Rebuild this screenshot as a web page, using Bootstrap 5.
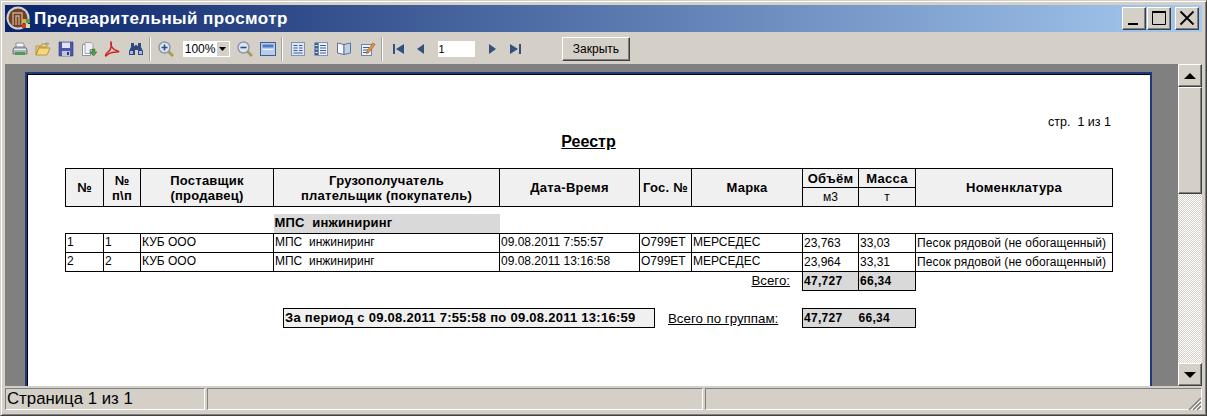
<!DOCTYPE html>
<html lang="ru">
<head>
    <meta charset="UTF-8">
    <meta name="viewport" content="width=device-width, initial-scale=1.0">
    <title>Предварительный просмотр</title>
    <link href="https://cdn.jsdelivr.net/npm/bootstrap@5.3.2/dist/css/bootstrap.min.css" rel="stylesheet">
    <style>
        html, body { height: 416px; overflow: hidden; background: #d4d0c8; }
        body { font-family: "Liberation Sans", Arial, sans-serif; color: #000; }
        .win-frame { height: 416px; background: #d4d0c8; border: 1px solid; border-color: #d4d0c8 #404040 #404040 #d4d0c8; box-shadow: inset 1px 1px 0 #fff, inset -1px -1px 0 #808080; padding: 4px 4px 4px 4px; }
        .win-title { height: 27px; background: linear-gradient(90deg, #0a246a 0%, #a6caf0 100%); padding: 0 3px 0 1px; }
        .win-title-text { font-size: 17px; font-weight: 700; color: #fff; letter-spacing: .42px; margin-left: 3px; line-height: 27px; white-space: nowrap; }
        .win-btn { width: 24px; height: 23px; background: #d4d0c8; border: 1px solid; border-color: #fff #404040 #404040 #fff; box-shadow: inset -1px -1px 0 #808080; margin-left: 1px; }
        .tool-bar { height: 32px; padding-left: 3px; padding-top: 1px; }
        .tool-icon { width: 23.2px; height: 16px; flex: none; text-align: center; line-height: 0; }
        .tool-sep { width: 2px; height: 24px; flex: none; background: #a8a59e; border-right: 1px solid #fff; margin: 0 3px 0 2px; }
        .tool-sep-wide { margin-right: 4px; }
        .zoom-combo { width: 47px; height: 16px; flex: none; background: #fff; font-size: 12px; line-height: 16px; padding-left: 2px; margin: 0 3.400px 0 5.400px; }
        .combo-arrow { width: 12px; height: 14px; background: #d4d0c8; margin: 1px 1px 1px 0; }
        .page-input { width: 37px; height: 16px; flex: none; background: #fff; font-size: 11px; line-height: 16px; padding-left: 1px; margin: 0 7px 0 4px; }
        .close-btn { width: 68px; height: 24px; flex: none; background: #d4d0c8; font-size: 12px; line-height: 22px; text-align: center; border: 1px solid; border-color: #fff #404040 #404040 #fff; box-shadow: inset -1px -1px 0 #808080; margin-left: 34px; }
        .view-row { height: 322px; }
        .view-area { background: #808080; padding: 8px 26px 0 20px; min-width: 0; }
        .sheet { height: 314px; background: #fff; border: solid #1f3a7a; border-width: 2px 2px 0 2px; box-shadow: inset 1px 1px 0 #000; padding: 0 0 0 38px; overflow: hidden; }
        .sheet-num { width: 1046px; text-align: right; font-size: 12.500px; line-height: 14px; padding-top: 41px; }
        .sheet-title { width: 1047px; text-align: center; font-size: 16px; font-weight: 700; text-decoration: underline; line-height: 18px; margin-top: 4px; margin-bottom: 17px; }
        .reg-table { table-layout: fixed; width: 1047px; border-collapse: collapse; font-size: 12px; }
        .reg-table th, .reg-table td { border: 1px solid #000; padding: 0 1px; overflow: hidden; white-space: nowrap; }
        .reg-table tr.head-top { height: 19px; }
        .reg-table tr.head-sub { height: 19px; }
        .reg-table th { background: #f0f0f0; font-size: 13px; line-height: 15px; font-weight: 700; text-align: center; vertical-align: middle; letter-spacing: .25px; }
        .reg-table th.unit-cell { font-weight: 400; font-size: 12px; letter-spacing: 0; }
        .reg-table tr.data-row td { height: 19px; line-height: 16px; vertical-align: top; font-size: 12px; }
        .reg-table tr.data-row td.num-cell { vertical-align: bottom; line-height: 17px; font-size: 12px; }
        .reg-table tr.data-row td.goods-cell { vertical-align: bottom; line-height: 17px; font-size: 12px; letter-spacing: .07px; }
        .reg-table tr.gap-row td { height: 7px; border: 0; padding: 0; }
        .reg-table tr.group-row td { height: 20px; border: 0; }
        .reg-table tr.group-row td.group-band { background: #d9d9d9; font-size: 13px; font-weight: 700; letter-spacing: .2px; line-height: 18px; }
        .reg-table tr.total-row td { height: 19px; border: 0; }
        .reg-table tr.total-row td.total-lbl { text-align: right; text-decoration: underline; font-size: 13.300px; padding-right: 12px; line-height: 18px; }
        .reg-table tr.total-row td.total-val { border: 1px solid #000; background: #d9d9d9; font-size: 12px; font-weight: 700; letter-spacing: .3px; }
        .period-row { margin-top: 17px; margin-left: 218px; }
        .period-box { width: 372px; height: 20px; flex: none; background: #f0f0f0; border: 1px solid #000; font-size: 13px; font-weight: 700; line-height: 18px; padding-left: 1px; letter-spacing: .27px; white-space: nowrap; overflow: hidden; }
        .period-lbl { width: 147px; flex: none; padding-left: 13px; font-size: 13.300px; text-decoration: underline; line-height: 21px; white-space: nowrap; }
        .period-sum { width: 114px; height: 20px; flex: none; background: #d9d9d9; border: 1px solid #000; font-size: 12px; font-weight: 700; line-height: 18px; padding-left: 1px; letter-spacing: .3px; }
        .scroll-col { width: 24px; flex: none; background-color: #f4f3f0; background-image: repeating-conic-gradient(#d4d0c8 0 25%, #fff 0 50%); background-size: 2px 2px; }
        .scroll-btn { height: 23px; background: #d4d0c8; border: 1px solid; border-color: #fff #404040 #404040 #fff; box-shadow: inset -1px -1px 0 #808080; }
        .scroll-thumb { height: 107px; background: #d4d0c8; border: 1px solid; border-color: #fff #404040 #404040 #fff; box-shadow: inset -1px -1px 0 #808080; }
        .status-bar { height: 25px; padding-top: 2px; }
        .status-cell { height: 22px; background: #d4d0c8; border: 1px solid; border-color: #808080 #fff #fff #808080; font-size: 16.800px; line-height: 20px; padding-left: 1px; white-space: nowrap; }
        .status-a { width: 200px; flex: none; }
        .status-b { width: 496px; flex: none; margin: 0 2px; }
        .size-grip { position: absolute; right: 0; bottom: 0; }
    </style>
</head>
<body>
    <div class="win-frame d-flex flex-column">
        <!-- title -->
        <div class="win-title d-flex align-items-center flex-none">
            <svg width="25" height="25" viewBox="0 0 25 25">
                <circle cx="12" cy="12" r="11.500" fill="#cfd0d4"/>
                <circle cx="12" cy="12" r="9.500" fill="#6e4028"/>
                <path d="M7 19V7h9v12M10 19V10h3v9" fill="none" stroke="#c8a888" stroke-width="1.400"/>
                <rect x="16" y="13" width="4" height="4" fill="#d8b040"/>
                <rect x="20" y="13" width="4" height="4" fill="#5a9a50"/>
                <rect x="16" y="18" width="4" height="4" fill="#c04030"/>
                <rect x="20" y="18" width="4" height="4" fill="#e0d8a0"/>
            </svg>
            <span class="win-title-text">Предварительный просмотр</span>
            <div class="d-flex ms-auto">
                <div class="win-btn"><svg class="d-block" width="22" height="21" viewBox="0 0 22 21"><rect x="5" y="15" width="10" height="2"/></svg></div>
                <div class="win-btn"><svg class="d-block" width="22" height="21" viewBox="0 0 22 21"><path d="M4.500 3.500h13v13h-13z" fill="none" stroke="#000"/><rect x="4" y="3" width="14" height="2"/></svg></div>
                <div class="win-btn ms-1"><svg class="d-block" width="22" height="21" viewBox="0 0 22 21"><path d="M4.500 3.500l13 13M17.500 3.500l-13 13" stroke="#000" stroke-width="1.800"/></svg></div>
            </div>
        </div>

        <!-- toolbar -->
        <div class="tool-bar d-flex align-items-center">
            <div class="tool-icon"><svg width="16" height="16" viewBox="0 0 16 16"><path d="M4 7V2h7l1 1v4z" fill="#f4f4f4" stroke="#7a8088" stroke-width=".8"/><path d="M1 8l2-2h10l2 2v5H1z" fill="#aeb4bc" stroke="#5e6670" stroke-width=".8"/><rect x="3" y="11" width="10" height="3" fill="#4f9a58"/><rect x="2" y="8" width="12" height="1" fill="#e6e8ea"/></svg></div>
            <div class="tool-icon"><svg width="16" height="16" viewBox="0 0 16 16"><path d="M1 5h5l1-2h5v3H4L1 14z" fill="#f0d070" stroke="#a88a30" stroke-width=".8"/><path d="M1 14l3-7h11l-3 7z" fill="#f6d878" stroke="#a88a30" stroke-width=".8"/><path d="M10 3q2-2 4 0" fill="none" stroke="#7a8ca8"/></svg></div>
            <div class="tool-icon"><svg width="16" height="16" viewBox="0 0 16 16"><path d="M1 1h14v14H1z" fill="#4d58a6" stroke="#2d3880" stroke-width=".6"/><rect x="4" y="1.500" width="8" height="5.500" fill="#dfe4f2"/><rect x="4" y="10" width="8" height="5" fill="#c0c6dc"/><rect x="9" y="11" width="2" height="3" fill="#2d3880"/></svg></div>
            <div class="tool-icon"><svg width="16" height="16" viewBox="0 0 16 16"><path d="M1.500 3.500h8v11h-8z" fill="#fff" stroke="#8a92a0"/><path d="M4 1.500h6l2 2v5H9v4H4z" fill="#eef0f4" stroke="#8a92a0" stroke-width=".8"/><path d="M11 8h3v3h2l-3.500 4L9 11h2z" fill="#4f9a48" stroke="#2f6a30" stroke-width=".5"/></svg></div>
            <div class="tool-icon"><svg width="16" height="16" viewBox="0 0 16 16"><path d="M7 1.500c-.8 3 1.500 7 6.500 8.500 1.500.4 2 1-.5 1-4 0-8 1-10.500 3.500C1 16 1 13 4 11c2.500-1.500 4-6 3-9.500z" fill="none" stroke="#d02020" stroke-width="1.500"/></svg></div>
            <div class="tool-icon"><svg width="16" height="16" viewBox="0 0 16 16"><path d="M3 2h3v3h1v-1h2v1h1V2h3v4l2 4v4h-5V9H7v5H1v-4l2-4z" fill="#2e4a7e"/><rect x="2" y="10" width="3" height="3" fill="#a8bcdc"/><rect x="11" y="10" width="3" height="3" fill="#a8bcdc"/></svg></div>
            <div class="tool-sep"></div>
            <div class="tool-icon"><svg width="16" height="16" viewBox="0 0 16 16"><path d="M10 10l5 5" stroke="#a8a050" stroke-width="3"/><circle cx="6.500" cy="6.500" r="5.500" fill="#dce6f2" stroke="#8a96a6" stroke-width="1.400"/><path d="M3.500 6.500h6M6.500 3.500v6" stroke="#2e4a7e" stroke-width="1.600"/></svg></div>
            <div class="zoom-combo d-flex justify-content-between">100%<div class="combo-arrow d-flex align-items-center justify-content-center"><svg width="7" height="4" viewBox="0 0 7 4"><path d="M0 0h7L3.500 4z"/></svg></div></div>
            <div class="tool-icon"><svg width="16" height="16" viewBox="0 0 16 16"><path d="M10 10l5 5" stroke="#a8a050" stroke-width="3"/><circle cx="6.500" cy="6.500" r="5.500" fill="#dce6f2" stroke="#8a96a6" stroke-width="1.400"/><path d="M3.500 6.500h6" stroke="#2e4a7e" stroke-width="1.600"/></svg></div>
            <div class="tool-icon"><svg width="16" height="16" viewBox="0 0 16 16"><rect x=".500" y="1.500" width="15" height="13" fill="#b8ccec" stroke="#3e5e98"/><rect x="2.500" y="3.500" width="11" height="3" fill="#4f7cc0"/><rect x="2.500" y="8" width="11" height="1" fill="#f0f4fa"/></svg></div>
            <div class="tool-sep"></div>
            <div class="tool-icon"><svg width="16" height="16" viewBox="0 0 16 16"><rect x="1.500" y="1.500" width="13" height="13" fill="#dce6f4" stroke="#7e94b8"/><path d="M3.500 4.500h4M9 4.500h3.500M3.500 7h4M9 7h3.500M3.500 9.500h4M9 9.500h3.500M3.500 12h9" stroke="#3e5e98"/></svg></div>
            <div class="tool-icon"><svg width="16" height="16" viewBox="0 0 16 16"><rect x="1.500" y="1.500" width="4" height="13" fill="#3e5e98"/><rect x="5.500" y="1.500" width="9" height="13" fill="#eef2f8" stroke="#7e94b8"/><path d="M7 4.500h6M7 7h6M7 9.500h6M7 12h6" stroke="#3e5e98"/><path d="M2.500 4.500h2M2.500 8h2M2.500 11.500h2" stroke="#fff"/></svg></div>
            <div class="tool-icon"><svg width="16" height="16" viewBox="0 0 16 16"><path d="M8 3.500v10L1.500 12V2z" fill="#f6f8fb" stroke="#5e7298"/><path d="M8 3.500l6.500-1.500v10L8 13.500z" fill="#c0d0e8" stroke="#5e7298"/></svg></div>
            <div class="tool-icon"><svg width="16" height="16" viewBox="0 0 16 16"><rect x="1.500" y="3.500" width="10" height="11" fill="#eef2f8" stroke="#6e84aa"/><path d="M3 6.500h6M3 9h6M3 11.500h6" stroke="#3e5e98"/><path d="M7 10l6-8 2 1.500-6 8-2.500 1z" fill="#e0a030" stroke="#a04030" stroke-width=".6"/></svg></div>
            <div class="tool-sep tool-sep-wide"></div>
            <div class="tool-icon"><svg width="16" height="16" viewBox="0 0 16 16"><path d="M2 3h2v10H2zM13 3v10L5 8z" fill="#34507e"/></svg></div>
            <div class="tool-icon"><svg width="16" height="16" viewBox="0 0 16 16"><path d="M10 3v10L3 8z" fill="#34507e"/></svg></div>
            <div class="page-input">1</div>
            <div class="tool-icon"><svg width="16" height="16" viewBox="0 0 16 16"><path d="M4 3v10l7-5z" fill="#34507e"/></svg></div>
            <div class="tool-icon"><svg width="16" height="16" viewBox="0 0 16 16"><path d="M2 3v10l8-5zM11 3h2v10h-2z" fill="#34507e"/></svg></div>
            <div class="close-btn">Закрыть</div>
        </div>

        <!-- report -->
        <div class="view-row d-flex">
            <div class="view-area flex-grow-1">
                <div class="sheet">
                    <div class="sheet-num">стр.&nbsp; 1 из 1</div>
                    <div class="sheet-title">Реестр</div>
                    <table class="reg-table">
                        <colgroup>
                            <col style="width:38px"><col style="width:37px"><col style="width:133px"><col style="width:226px"><col style="width:140px"><col style="width:52px"><col style="width:111px"><col style="width:56px"><col style="width:57px"><col style="width:197px">
                        </colgroup>
                        <tr class="head-top">
                            <th rowspan="2">№</th>
                            <th rowspan="2">№<br>п\п</th>
                            <th rowspan="2">Поставщик<br>(продавец)</th>
                            <th rowspan="2">Грузополучатель<br>плательщик (покупатель)</th>
                            <th rowspan="2">Дата-Время</th>
                            <th rowspan="2">Гос. №</th>
                            <th rowspan="2">Марка</th>
                            <th>Объём</th>
                            <th>Масса</th>
                            <th rowspan="2">Номенклатура</th>
                        </tr>
                        <tr class="head-sub">
                            <th class="unit-cell">м3</th>
                            <th class="unit-cell">т</th>
                        </tr>
                        <tr class="gap-row"><td colspan="10"></td></tr>
                        <tr class="group-row">
                            <td colspan="3"></td>
                            <td class="group-band">МПС&nbsp; инжиниринг</td>
                            <td colspan="6"></td>
                        </tr>
                        <tr class="data-row">
                            <td>1</td><td>1</td><td>КУБ ООО</td><td>МПС&nbsp; инжиниринг</td><td>09.08.2011 7:55:57</td><td>О799ЕТ</td><td>МЕРСЕДЕС</td><td class="num-cell">23,763</td><td class="num-cell">33,03</td><td class="goods-cell">Песок рядовой (не обогащенный)</td>
                        </tr>
                        <tr class="data-row">
                            <td>2</td><td>2</td><td>КУБ ООО</td><td>МПС&nbsp; инжиниринг</td><td>09.08.2011 13:16:58</td><td>О799ЕТ</td><td>МЕРСЕДЕС</td><td class="num-cell">23,964</td><td class="num-cell">33,31</td><td class="goods-cell">Песок рядовой (не обогащенный)</td>
                        </tr>
                        <tr class="total-row">
                            <td colspan="7" class="total-lbl">Всего:</td>
                            <td class="total-val">47,727</td>
                            <td class="total-val">66,34</td>
                            <td></td>
                        </tr>
                    </table>
                    <div class="period-row d-flex">
                        <div class="period-box">За период с 09.08.2011 7:55:58 по 09.08.2011 13:16:59</div>
                        <div class="period-lbl">Всего по группам:</div>
                        <div class="period-sum d-flex"><span>47,727</span><span class="ms-3">66,34</span></div>
                    </div>
                </div>
            </div>
            <div class="scroll-col d-flex flex-column">
                <div class="scroll-btn d-flex align-items-center justify-content-center"><svg width="12" height="6" viewBox="0 0 12 6"><path d="M6 0l6 6H0z"/></svg></div>
                <div class="scroll-thumb"></div>
                <div class="scroll-btn d-flex align-items-center justify-content-center mt-auto"><svg width="12" height="6" viewBox="0 0 12 6"><path d="M0 0h12L6 6z"/></svg></div>
            </div>
        </div>

        <!-- status -->
        <div class="status-bar d-flex position-relative">
            <div class="status-cell status-a">Страница 1 из 1</div>
            <div class="status-cell status-b"></div>
            <div class="status-cell flex-grow-1"></div>
            <svg class="size-grip" width="16" height="16" viewBox="0 0 16 16"><path d="M15 3L3 15M15 7l-8 8M15 11l-4 4" stroke="#808080" stroke-width="1.500"/><path d="M15 5L5 15M15 9l-6 6M15 13l-2 2" stroke="#fff"/></svg>
        </div>
    </div>
    <script src="https://cdn.jsdelivr.net/npm/bootstrap@5.3.2/dist/js/bootstrap.bundle.min.js"></script>
</body>
</html>
